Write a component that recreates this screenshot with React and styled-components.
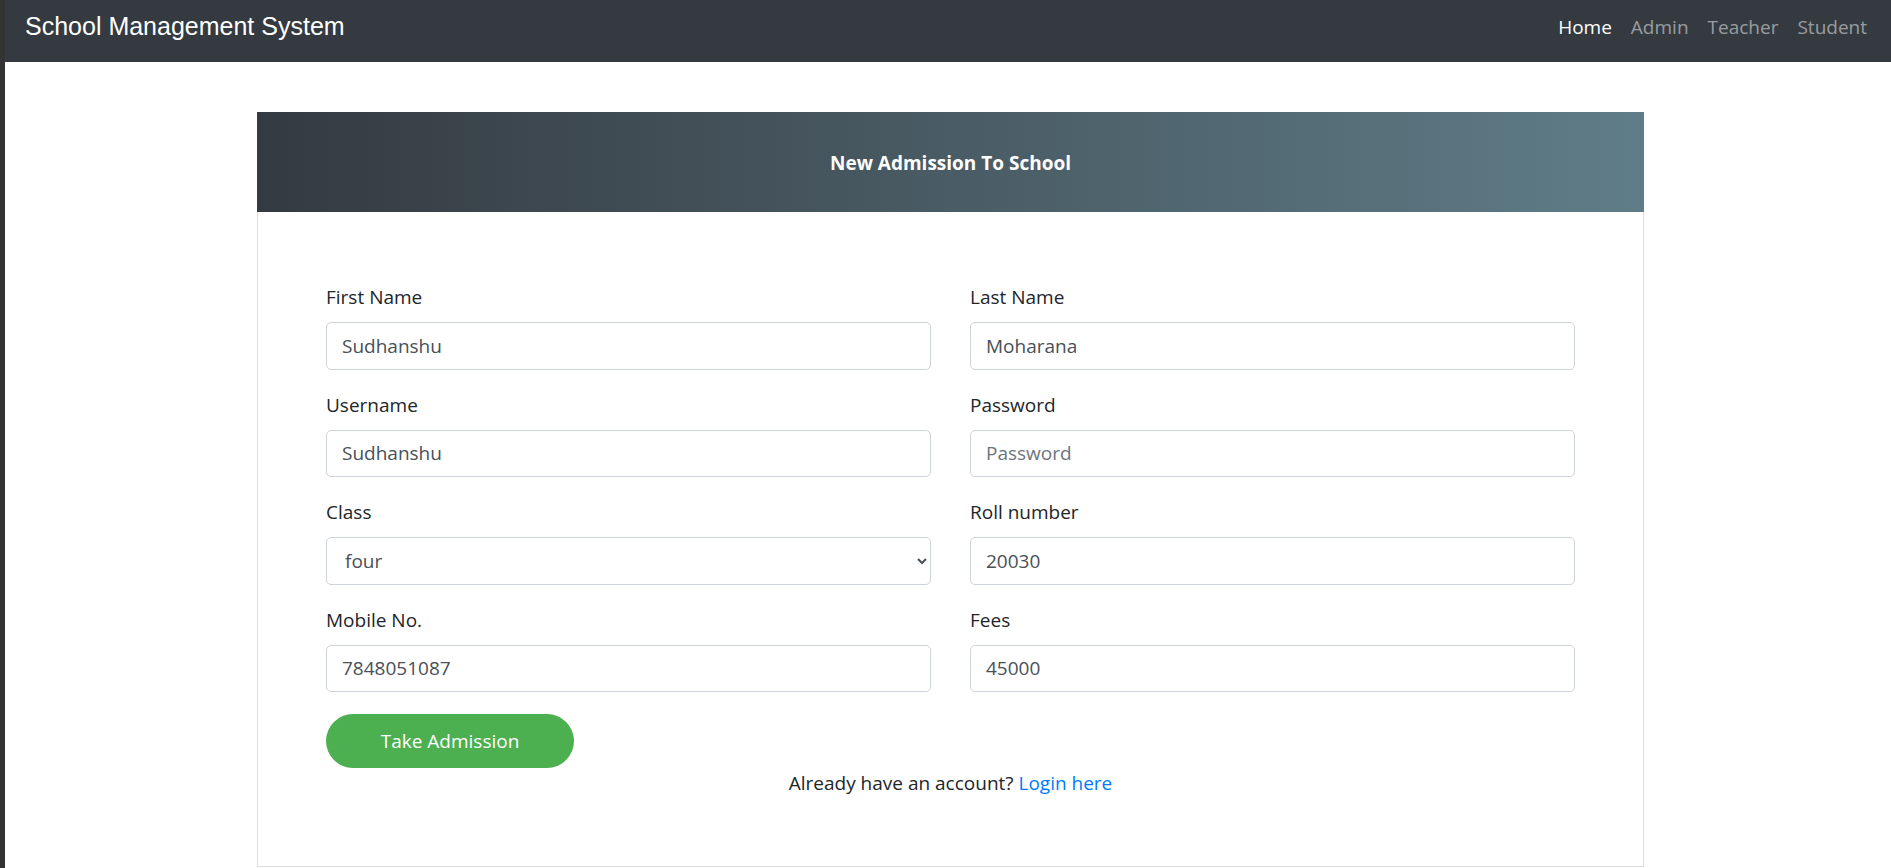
import React from 'react'
import styled, { createGlobalStyle } from 'styled-components'

const GlobalStyle = createGlobalStyle`
    * {
        box-sizing: border-box;
    }
    body {
        margin: 0;
        background: #ffffff;
        font-family: "Open Sans", "Noto Sans", sans-serif;
        color: #212529;
    }
`

const fields = [
    [
        { label: 'First Name', value: 'Sudhanshu' },
        { label: 'Last Name', value: 'Moharana' },
    ],
    [
        { label: 'Username', value: 'Sudhanshu' },
        { label: 'Password', placeholder: 'Password', type: 'password' },
    ],
    [
        { label: 'Class', select: true, value: 'four' },
        { label: 'Roll number', value: '20030' },
    ],
    [
        { label: 'Mobile No.', value: '7848051087' },
        { label: 'Fees', value: '45000' },
    ],
]

const links = ['Home', 'Admin', 'Teacher', 'Student']

function App() {
    return (
        <Page>
            <GlobalStyle />
            <Navbar>
                <Brand href="#">School Management System</Brand>
                <NavList>
                    {links.map((item, index) => (
                        <NavLink key={item} href="#" $active={index === 0}>
                            {item}
                        </NavLink>
                    ))}
                </NavList>
            </Navbar>

            <Main>
                <Card>
                    <CardHeader>New Admission To School</CardHeader>
                    <CardBody>
                        <Form onSubmit={(e) => e.preventDefault()}>
                            {fields.map((row, i) => (
                                <Row key={i}>
                                    {row.map((f) => (
                                        <Group key={f.label}>
                                            <Label>{f.label}</Label>
                                            {f.select ? (
                                                <Select defaultValue={f.value}>
                                                    <option value="one">one</option>
                                                    <option value="two">two</option>
                                                    <option value="three">three</option>
                                                    <option value="four">four</option>
                                                    <option value="five">five</option>
                                                </Select>
                                            ) : (
                                                <Input
                                                    type={f.type || 'text'}
                                                    defaultValue={f.value}
                                                    placeholder={f.placeholder}
                                                />
                                            )}
                                        </Group>
                                    ))}
                                </Row>
                            ))}
                            <SubmitButton type="submit">Take Admission</SubmitButton>
                            <Footer>
                                Already have an account? <LoginLink href="#">Login here</LoginLink>
                            </Footer>
                        </Form>
                    </CardBody>
                </Card>
            </Main>
        </Page>
    )
}

export default App

const Page = styled.div`
    min-height: 868px;
    border-left: 5px solid #333333;
    overflow: hidden;
`

const Navbar = styled.nav`
    display: flex;
    align-items: center;
    justify-content: space-between;
    height: 62px;
    padding: 0 15px 0 20px;
    background: #343a40;
`

const Brand = styled.a`
    font-family: "Liberation Sans", Arial, sans-serif;
    font-size: 25px;
    color: #ffffff;
    text-decoration: none;
    margin-top: -9px;
`

const NavList = styled.div`
    display: flex;
    align-items: center;
    margin-top: -9px;
`

const NavLink = styled.a`
    padding: 0 9px 0 10px;
    font-size: 19px;
    text-decoration: none;
    color: ${(p) => (p.$active ? '#ffffff' : 'rgba(255, 255, 255, 0.5)')};
`

const Main = styled.main`
    padding-left: 5px;
`

const Card = styled.div`
    width: 1387px;
    margin: 50px auto 0;
    border: 1px solid #dcdcdc;
    background: #ffffff;
`

const CardHeader = styled.div`
    display: flex;
    align-items: center;
    justify-content: center;
    height: 100px;
    margin: -1px -1px 0;
    padding-top: 2px;
    background: linear-gradient(to right, #343a41, #5f7d88);
    color: #ffffff;
    font-size: 19px;
    font-weight: 700;
`

const CardBody = styled.div`
    padding: 70px 68px 68px;
`

const Form = styled.form`
    display: flex;
    flex-direction: column;
`

const Row = styled.div`
    display: grid;
    grid-template-columns: 1fr 1fr;
    column-gap: 39px;
`

const Group = styled.div`
    display: flex;
    flex-direction: column;
    margin-bottom: 20px;
`

const Label = styled.label`
    font-size: 19px;
    line-height: 30px;
    margin-bottom: 10px;
    color: #212529;
`

const Input = styled.input`
    height: 47.5px;
    padding: 0 15px;
    border: 1px solid #ced4da;
    border-radius: 5px;
    font-family: "Open Sans", "Noto Sans", sans-serif;
    font-size: 19px;
    color: #495057;
    background: #ffffff;
    outline: none;

    &::placeholder {
        color: #6c757d;
    }
`

const Select = styled.select`
    height: 47.5px;
    padding: 0 14px;
    border: 1px solid #ced4da;
    border-radius: 5px;
    font-family: "Open Sans", "Noto Sans", sans-serif;
    font-size: 19px;
    color: #495057;
    background: #ffffff;
    outline: none;
`

const SubmitButton = styled.button`
    align-self: flex-start;
    width: 248px;
    height: 54px;
    margin-top: 2px;
    border: none;
    border-radius: 27px;
    background: #4caf50;
    color: #ffffff;
    font-family: "Open Sans", "Noto Sans", sans-serif;
    font-size: 19px;
    cursor: pointer;
`

const Footer = styled.p`
    margin: 0;
    text-align: center;
    font-size: 19px;
    line-height: 30px;
    color: #212529;
`

const LoginLink = styled.a`
    color: #007bff;
    text-decoration: none;
`
